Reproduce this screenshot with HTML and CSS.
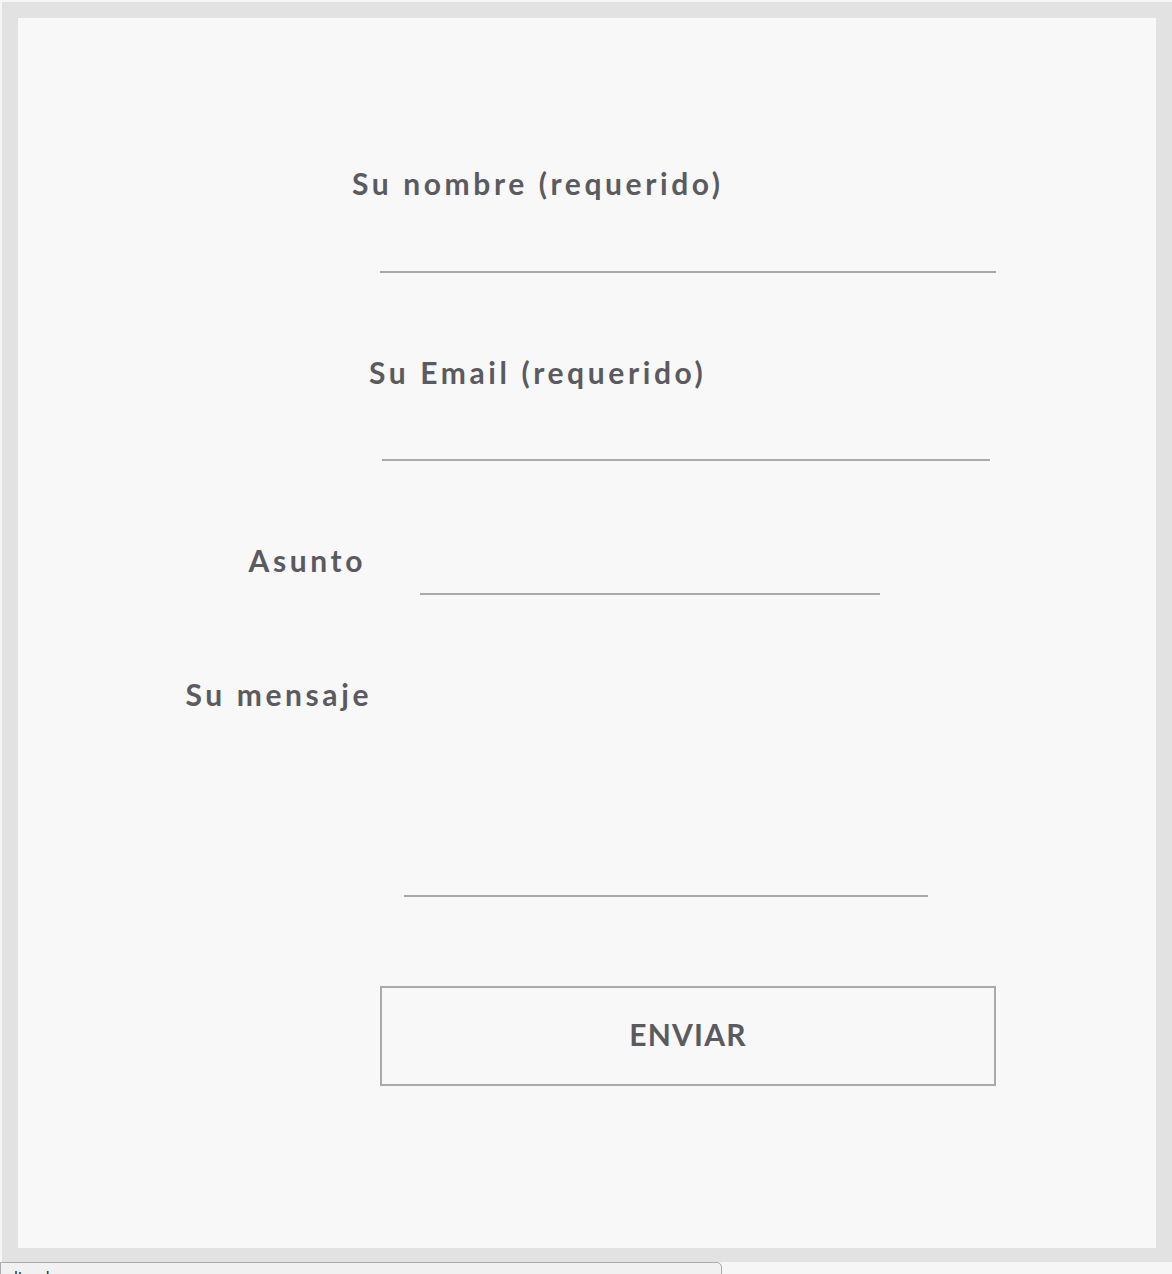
FILE: index.html
```html
<!DOCTYPE html>
<html lang="es">
<head>
<meta charset="utf-8">
<title>Contacto</title>
<link rel="stylesheet" href="styles.css">
</head>
<body>
<div class="frame">
  <form class="panel">
    <div class="field field-stacked">
      <label class="label label-name" for="name">Su nombre (requerido)</label>
      <input class="input input-name" id="name" type="text">
    </div>
    <div class="field field-stacked">
      <label class="label label-email" for="email">Su Email (requerido)</label>
      <input class="input input-email" id="email" type="email">
    </div>
    <div class="field field-inline field-subject">
      <label class="label label-side" for="subject">Asunto</label>
      <input class="input input-subject" id="subject" type="text">
    </div>
    <div class="field field-inline field-message">
      <label class="label label-side label-message" for="message">Su mensaje</label>
      <textarea class="input input-message" id="message"></textarea>
    </div>
    <button class="submit" type="button">ENVIAR</button>
  </form>
</div>
<div class="tray">lt&nbsp;&nbsp;&nbsp;&nbsp;&nbsp;l</div>
</body>
</html>
```

FILE: styles.css
```css
html, body {
  margin: 0;
  padding: 0;
}

body {
  background: #f6f6f6;
  font-family: "Lato", "Liberation Sans", sans-serif;
  overflow: hidden;
  height: 1274px;
}

.frame {
  margin: 2px 0 0 2px;
  border: 16px solid #e2e2e2;
  border-bottom-width: 14px;
  background: #f8f8f8;
  height: 1230px;
}

.panel {
  display: flex;
  flex-direction: column;
  align-items: flex-start;
  padding-top: 147px;
}

.label {
  display: block;
  font-size: 30px;
  line-height: 36px;
  font-weight: 700;
  color: #5a5a5f;
  letter-spacing: 3.6px;
  white-space: nowrap;
}

.label-name {
  margin-left: 334px;
}

.label-email {
  margin-left: 351px;
}

.field-stacked + .field-stacked {
  margin-top: 81px;
}

.input {
  display: block;
  box-sizing: border-box;
  border: 0;
  border-bottom: 2px solid #aaaaaa;
  background: transparent;
  outline: none;
  padding: 0;
  font: inherit;
  resize: none;
}

.input-name {
  margin: 30px 0 0 362px;
  width: 616px;
  height: 42px;
}

.input-email {
  margin: 29px 0 0 364px;
  width: 608px;
  height: 42px;
}

.field-inline {
  display: flex;
  align-items: flex-start;
  margin-top: 81px;
}

.label-side {
  box-sizing: border-box;
  text-align: right;
  width: 348px;
}

.input-subject {
  margin-left: 54px;
  width: 460px;
  height: 53px;
}

.label-message {
  width: 354px;
}

.input-message {
  margin-left: 32px;
  width: 524px;
  height: 221px;
}

.submit {
  margin: 89px 0 0 362px;
  box-sizing: border-box;
  width: 616px;
  height: 100px;
  border: 2px solid #aaaaaa;
  background: #f8f8f8;
  font-family: "Lato", "Liberation Sans", sans-serif;
  font-size: 30px;
  font-weight: 700;
  letter-spacing: 1.2px;
  color: #5a5a5f;
  padding: 0 0 4px 0;
}

.tray {
  box-sizing: border-box;
  width: 722px;
  height: 40px;
  border: 1px solid #aaaaaa;
  border-top-right-radius: 5px;
  background: #f1f1f1;
  font-family: "DejaVu Sans", sans-serif;
  font-size: 14px;
  line-height: 20px;
  color: #111;
  padding: 4px 0 0 13px;
  white-space: pre;
}
```
